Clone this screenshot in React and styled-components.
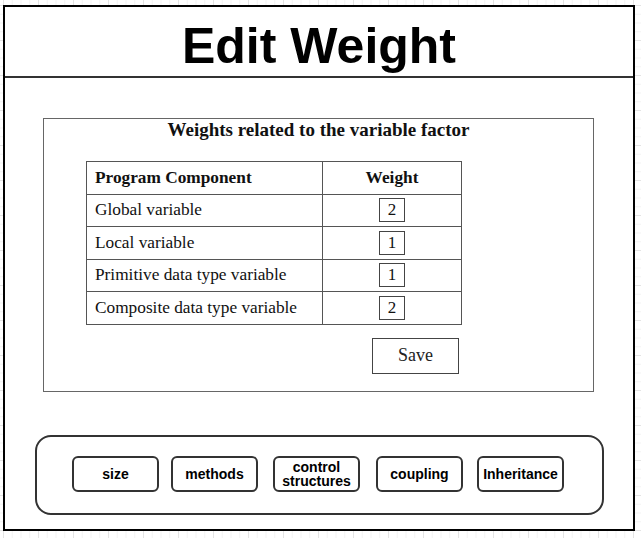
import React, { useState } from 'react';
import styled, { createGlobalStyle } from 'styled-components';

const GlobalStyle = createGlobalStyle`
  html, body {
    margin: 0;
    padding: 0;
  }
  body {
    width: 641px;
    height: 538px;
    overflow: hidden;
    background-color: #fff;
    background-image:
      linear-gradient(to right, #e4e4e4 1px, transparent 1px),
      linear-gradient(to bottom, #e4e4e4 1px, transparent 1px),
      linear-gradient(to right, #f3f3f3 1px, transparent 1px),
      linear-gradient(to bottom, #f3f3f3 1px, transparent 1px);
    background-size: 35px 35px, 35px 35px, 8.75px 8.75px, 8.75px 8.75px;
    background-position: 3px 5px;
  }
`;

const Frame = styled.div`
  box-sizing: border-box;
  margin: 5px 0 0 3px;
  width: 632px;
  height: 526px;
  border: 2px solid #000;
  background: #fff;
  display: flex;
  flex-direction: column;
`;

const Header = styled.div`
  height: 69px;
  border-bottom: 2px solid #333;
  display: flex;
  align-items: center;
  justify-content: center;
`;

const Title = styled.h1`
  margin: 0;
  font-family: 'Liberation Sans', Arial, sans-serif;
  font-weight: 700;
  font-size: 50px;
  color: #000;
  padding-top: 9px;
`;

const Body = styled.div`
  flex: 1;
  display: flex;
  flex-direction: column;
  align-items: flex-start;
  padding: 40px 0 0 38px;
`;

const Panel = styled.div`
  box-sizing: border-box;
  width: 551px;
  height: 274px;
  border: 1px solid #666;
  font-family: 'Liberation Serif', 'Times New Roman', serif;
  display: flex;
  flex-direction: column;
  align-items: flex-start;
`;

const PanelTitle = styled.div`
  align-self: center;
  margin-top: 0;
  font-weight: 700;
  font-size: 19px;
  color: #111;
`;

const Table = styled.table`
  margin: 20px 0 0 42px;
  border-collapse: collapse;
  font-size: 17.3px;
  color: #111;
`;

const Cell = styled.td`
  border: 1.5px solid #555;
  height: 31.5px;
  padding: 0 8px;
  width: ${(p) => p.$w}px;
  text-align: ${(p) => (p.$center ? 'center' : 'left')};
  font-weight: ${(p) => (p.$bold ? 700 : 400)};
`;

const WeightBox = styled.input`
  box-sizing: border-box;
  width: 26px;
  height: 24px;
  border: 1.5px solid #444;
  padding: 0;
  text-align: center;
  font-family: 'Liberation Serif', 'Times New Roman', serif;
  font-size: 17px;
  color: #111;
  outline: none;
  vertical-align: middle;
`;

const SaveButton = styled.button`
  box-sizing: border-box;
  margin: 13px 0 0 328px;
  width: 87px;
  height: 36px;
  border: 1.5px solid #444;
  background: #fff;
  font-family: 'Liberation Serif', 'Times New Roman', serif;
  font-weight: 400;
  font-size: 18px;
  color: #222;
`;

const Nav = styled.div`
  box-sizing: border-box;
  margin: 43px 0 0 -8px;
  width: 569px;
  height: 80px;
  border: 2px solid #333;
  border-radius: 16px;
  display: flex;
  align-items: center;
  gap: 12px;
  padding: 0 0 2px 35px;
`;

const NavButton = styled.button`
  box-sizing: border-box;
  width: 87px;
  height: 36px;
  border: 2px solid #333;
  border-radius: 6px;
  background: #fff;
  padding: 0;
  font-family: 'Liberation Sans', Arial, sans-serif;
  font-weight: 700;
  font-size: 14px;
  line-height: 14px;
  color: #000;
  margin-left: ${(p) => p.$shift || 0}px;
`;

const rows = [
  ['Global variable', '2'],
  ['Local variable', '1'],
  ['Primitive data type variable', '1'],
  ['Composite data type variable', '2'],
];

export default function App() {
  const [weights, setWeights] = useState(rows.map((r) => r[1]));

  return (
    <>
      <GlobalStyle />
      <Frame>
        <Header>
          <Title>Edit Weight</Title>
        </Header>
        <Body>
          <Panel>
            <PanelTitle>Weights related to the variable factor</PanelTitle>
            <Table>
              <tbody>
                <tr>
                  <Cell $w={219} $bold>Program Component</Cell>
                  <Cell $w={122} $bold $center>Weight</Cell>
                </tr>
                {rows.map((r, i) => (
                  <tr key={r[0]}>
                    <Cell $w={219}>{r[0]}</Cell>
                    <Cell $w={122} $center>
                      <WeightBox
                        value={weights[i]}
                        onChange={(e) => {
                          const next = [...weights];
                          next[i] = e.target.value;
                          setWeights(next);
                        }}
                      />
                    </Cell>
                  </tr>
                ))}
              </tbody>
            </Table>
            <SaveButton>Save</SaveButton>
          </Panel>
          <Nav>
            <NavButton>size</NavButton>
            <NavButton>methods</NavButton>
            <NavButton $shift={3}>control<br />structures</NavButton>
            <NavButton $shift={4}>coupling</NavButton>
            <NavButton $shift={2}>Inheritance</NavButton>
          </Nav>
        </Body>
      </Frame>
    </>
  );
}
